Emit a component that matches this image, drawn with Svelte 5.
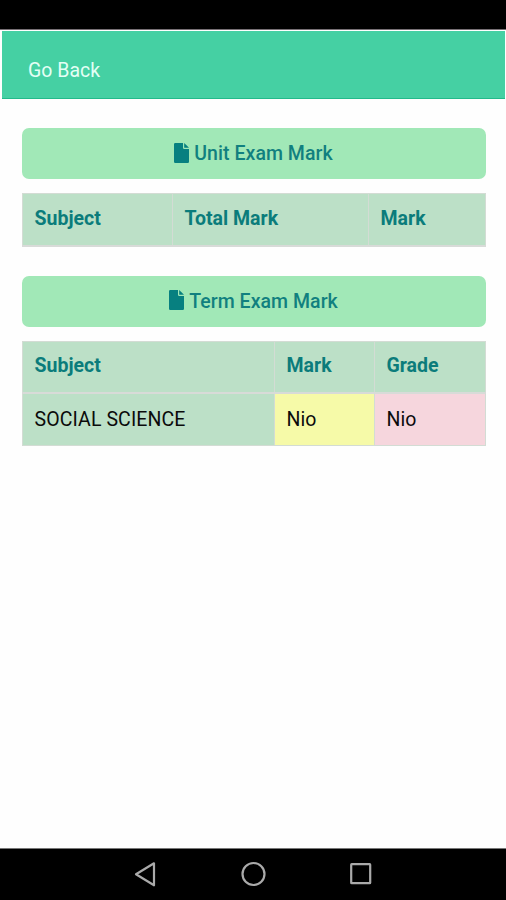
<script lang="ts">
    const sections = [
        {
            title: 'Unit Exam Mark',
            columns: ['Subject', 'Total Mark', 'Mark'],
            widths: [150, 196, 117],
            rows: [] as string[][],
        },
        {
            title: 'Term Exam Mark',
            columns: ['Subject', 'Mark', 'Grade'],
            widths: [252, 100, 111],
            rows: [['SOCIAL SCIENCE', 'Nio', 'Nio']],
        },
    ];
</script>

<div class="screen">
    <div class="status-bar"></div>
    <header>
        <span class="back">Go Back</span>
    </header>

    <main>
        {#each sections as section}
            <section>
                <h2>
                    <svg class="file-icon" viewBox="0 0 15 20" width="15" height="20">
                        <path d="M0 1.2Q0 0 1.2 0H9V4.8Q9 6 10.2 6H15V18.8Q15 20 13.8 20H1.2Q0 20 0 18.8Z" />
                        <path d="M10.2 0L15 4.8H10.2Z" />
                    </svg>
                    <span>{section.title}</span>
                </h2>
                <table>
                    <colgroup>
                        {#each section.widths as width}
                            <col style="width: {width}px" />
                        {/each}
                    </colgroup>
                    <thead>
                        <tr>
                            {#each section.columns as column}
                                <th>{column}</th>
                            {/each}
                        </tr>
                    </thead>
                    <tbody>
                        {#each section.rows as row}
                            <tr>
                                <td class="subject">{row[0]}</td>
                                <td class="mark">{row[1]}</td>
                                <td class="grade">{row[2]}</td>
                            </tr>
                        {/each}
                    </tbody>
                </table>
            </section>
        {/each}
    </main>

    <nav>
        <svg width="24" height="28" viewBox="0 0 24 28">
            <path d="M3 14.3L21 3.3V25.3Z" />
        </svg>
        <svg width="26" height="28" viewBox="0 0 26 28">
            <circle cx="13.5" cy="14" r="11" />
        </svg>
        <svg width="24" height="28" viewBox="0 0 24 28">
            <rect x="2.2" y="4.2" width="19" height="19" rx="0.5" />
        </svg>
    </nav>
</div>

<style>
    :global(body) {
        margin: 0;
        background: #fff;
    }

    .screen {
        display: flex;
        flex-direction: column;
        height: 900px;
        font-family: Roboto, "Liberation Sans", sans-serif;
        font-size: 19.5px;
        color: #0b0b0b;
        background: #fefefe;
    }

    .status-bar {
        height: 29px;
        background: #000;
        border-bottom: 1px solid #776f74;
    }

    header {
        display: flex;
        align-items: center;
        box-sizing: border-box;
        height: 68px;
        margin: 1px 1px 0 2px;
        padding: 11px 26px 0;
        background: #45d0a3;
        border-bottom: 1px solid #22ba8b;
    }

    .back {
        color: #e4fff5;
    }

    main {
        flex: 1;
        padding: 29px 20px 0 22px;
    }

    section {
        margin-bottom: 29px;
    }

    h2 {
        display: flex;
        align-items: center;
        justify-content: center;
        gap: 5px;
        box-sizing: border-box;
        height: 51px;
        margin: 0 0 14px;
        padding: 0 1px 0 0;
        border-radius: 7px;
        background: #a1e8b7;
        color: #11807f;
        font-size: 19.5px;
        font-weight: 500;
        letter-spacing: 0.05px;
    }

    .file-icon {
        margin-bottom: 2px;
        fill: #078080;
    }

    table {
        width: 464px;
        table-layout: fixed;
        border-collapse: collapse;
        border: 1px solid #dcdfdc;
    }

    th,
    td {
        box-sizing: border-box;
        height: 52px;
        padding: 0 11.5px;
        border: 1px solid #d3dcd4;
        text-align: left;
    }

    th {
        padding-bottom: 2px;
        background: #bce0c7;
        border-bottom: 2px solid #d8dbd8;
        color: #0b7c7b;
        font-weight: 700;
    }

    td {
        padding-top: 1px;
    }

    .subject {
        background: #bce0c7;
        letter-spacing: 0.1px;
    }

    .mark {
        background: #f6faa8;
    }

    .grade {
        background: #f6d6dd;
    }

    nav {
        display: flex;
        align-items: center;
        justify-content: center;
        gap: 83px;
        height: 52px;
        padding-bottom: 2px;
        box-sizing: border-box;
        border-top: 1px solid #777;
        background: #000;
    }

    nav svg {
        fill: none;
        stroke: #aaa;
        stroke-width: 2.2;
        stroke-linejoin: round;
    }
</style>
